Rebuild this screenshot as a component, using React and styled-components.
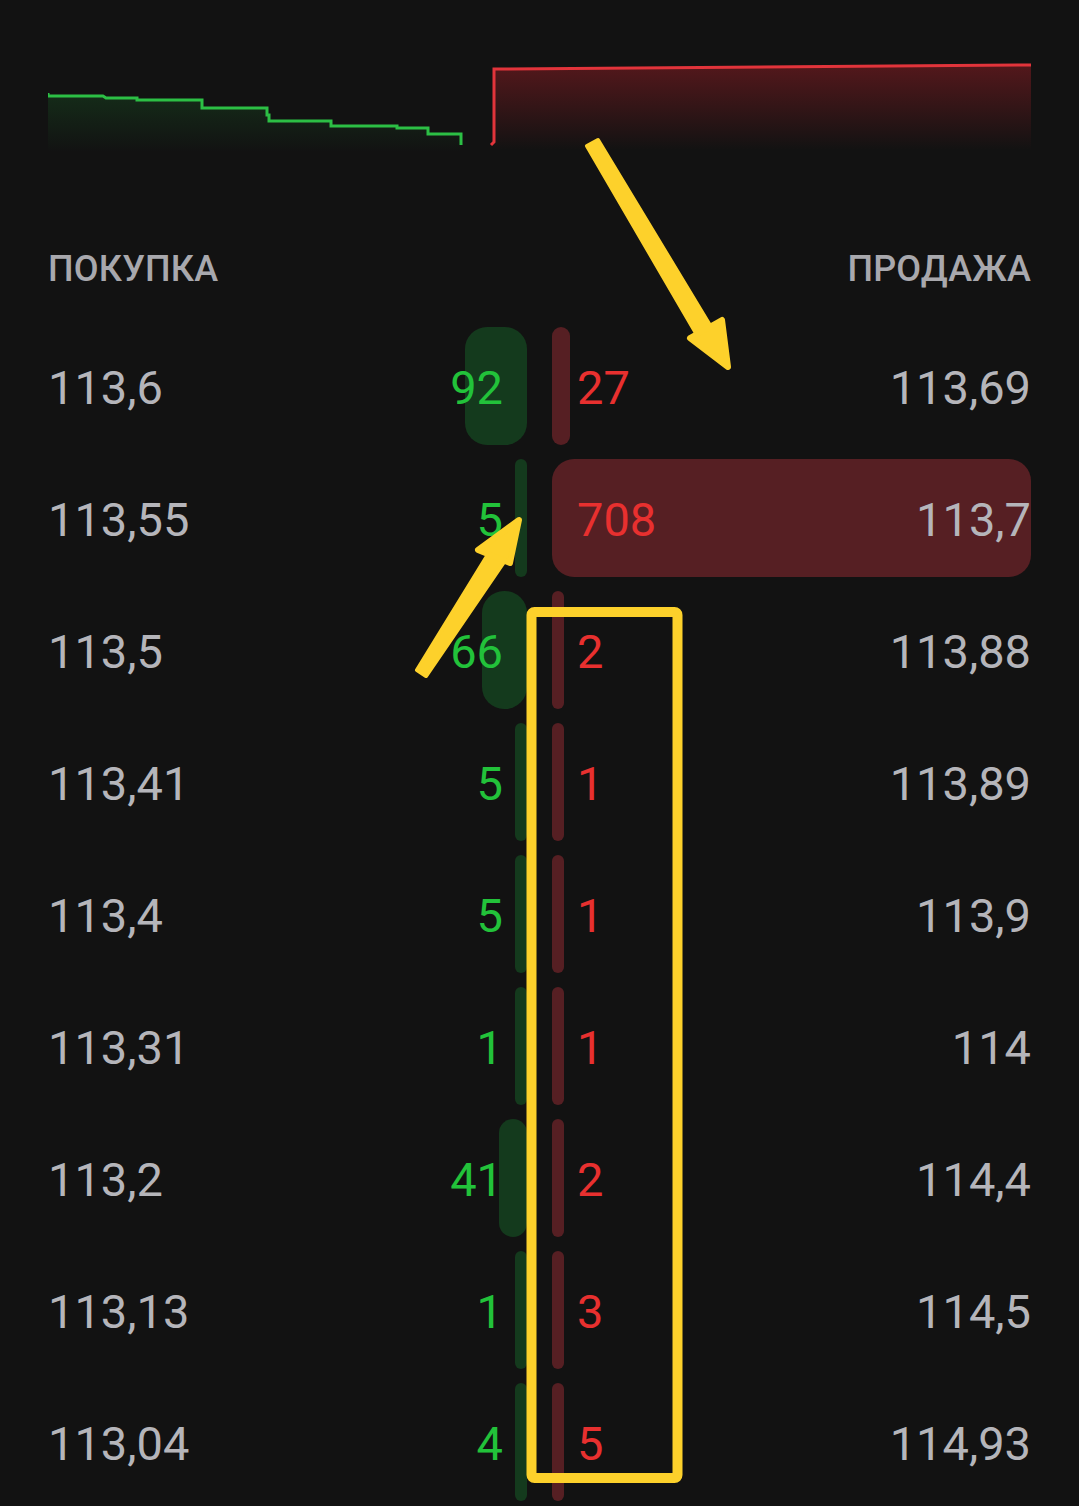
import React from "react";
import styled, { createGlobalStyle } from "styled-components";

const GlobalStyle = createGlobalStyle`
	html, body {
		margin: 0;
		padding: 0;
		background: #121212;
	}
	body {
		font-family: Roboto, "Noto Sans", "Liberation Sans", sans-serif;
	}
`;

const MAX_QTY = 708;
const SIDE_WIDTH = 479;

const bids = [
	{ price: "113,6", qty: 92 },
	{ price: "113,55", qty: 5 },
	{ price: "113,5", qty: 66 },
	{ price: "113,41", qty: 5 },
	{ price: "113,4", qty: 5 },
	{ price: "113,31", qty: 1 },
	{ price: "113,2", qty: 41 },
	{ price: "113,13", qty: 1 },
	{ price: "113,04", qty: 4 },
];

const asks = [
	{ price: "113,69", qty: 27 },
	{ price: "113,7", qty: 708 },
	{ price: "113,88", qty: 2 },
	{ price: "113,89", qty: 1 },
	{ price: "113,9", qty: 1 },
	{ price: "114", qty: 1 },
	{ price: "114,4", qty: 2 },
	{ price: "114,5", qty: 3 },
	{ price: "114,93", qty: 5 },
];

const barWidth = (qty) => Math.max(12, (qty / MAX_QTY) * SIDE_WIDTH);

const DepthChart = () => (
	<ChartBox>
		<svg width="983" height="100" viewBox="48 55 983 100">
			<defs>
				<linearGradient id="gFill" x1="0" y1="0" x2="0" y2="1">
					<stop offset="0" stopColor="#22b43c" stopOpacity="0.16" />
					<stop offset="1" stopColor="#22b43c" stopOpacity="0" />
				</linearGradient>
				<linearGradient id="rFill" x1="0" y1="0" x2="0" y2="1">
					<stop offset="0" stopColor="#c8222c" stopOpacity="0.36" />
					<stop offset="1" stopColor="#c8222c" stopOpacity="0" />
				</linearGradient>
			</defs>
			<path
				d="M48,93 V96 H103 L106,98 H137 V100 H202 V108 H267 V115 H269 V121 H331 V126 H397 V128 H428 V134 H461 V152 H48 Z"
				fill="url(#gFill)"
			/>
			<path
				d="M48,93 V96 H103 L106,98 H137 V100 H202 V108 H267 V115 H269 V121 H331 V126 H397 V128 H428 V134 H461 V145"
				fill="none"
				stroke="#2cbf45"
				strokeWidth="3"
			/>
			<path d="M494,150 V69 L1031,65 V150 Z" fill="url(#rFill)" />
			<path
				d="M491,145 L494,142 V69 L1031,65"
				fill="none"
				stroke="#e2343b"
				strokeWidth="3"
			/>
		</svg>
	</ChartBox>
);

const Annotations = () => (
	<Overlay width="1079" height="1506" viewBox="0 0 1079 1506">
		<g fill="#fdd12b" stroke="#fdd12b" strokeLinejoin="round" strokeLinecap="round">
			<polygon points="587,146 598,140 714,332 700,340" strokeWidth="4" />
			<polygon points="690,338 722,320 728,367" strokeWidth="6" />
			<polygon points="417,670 426,676 508,556 492,548" strokeWidth="4" />
			<polygon points="478,550 510,563 519,520" strokeWidth="6" />
		</g>
		<rect
			x="531.5"
			y="612"
			width="146"
			height="866"
			rx="3"
			fill="none"
			stroke="#fdd12b"
			strokeWidth="10"
		/>
	</Overlay>
);

const App = () => (
	<>
		<GlobalStyle />
		<Page>
			<DepthChart />
			<Header>
				<HeaderLabel>ПОКУПКА</HeaderLabel>
				<HeaderLabel>ПРОДАЖА</HeaderLabel>
			</Header>
			<Book>
				{bids.map((bid, i) => (
					<Row key={i}>
						<Side>
							<Bar $side="bid" style={{ width: barWidth(bid.qty) }} />
							<Price>{bid.price}</Price>
							<Qty $side="bid">{bid.qty}</Qty>
						</Side>
						<Side>
							<Bar $side="ask" style={{ width: barWidth(asks[i].qty) }} />
							<Qty $side="ask">{asks[i].qty}</Qty>
							<Price>{asks[i].price}</Price>
						</Side>
					</Row>
				))}
			</Book>
			<Annotations />
		</Page>
	</>
);

export default App;

const Page = styled.div`
	position: relative;
	width: 1079px;
	height: 1506px;
	overflow: hidden;
	box-sizing: border-box;
	padding: 55px 48px 0;
	background: #121212;
`;

const ChartBox = styled.div`
	height: 100px;
	svg {
		display: block;
	}
`;

const Header = styled.div`
	display: flex;
	justify-content: space-between;
	align-items: center;
	height: 60px;
	margin-top: 84px;
`;

const HeaderLabel = styled.span`
	font-size: 36px;
	font-weight: 500;
	color: #a8a8ad;
	letter-spacing: 0.2px;
`;

const Book = styled.div`
	display: grid;
	grid-auto-rows: 118px;
	row-gap: 14px;
	padding-top: 28px;
`;

const Row = styled.div`
	display: grid;
	grid-template-columns: 1fr 1fr;
	column-gap: 25px;
`;

const Side = styled.div`
	position: relative;
	display: flex;
	align-items: center;
	justify-content: space-between;
	padding-top: 3px;
	box-sizing: border-box;
	font-size: 47px;
	line-height: 1;
`;

const Bar = styled.div`
	position: absolute;
	top: 0;
	bottom: 0;
	${(p) => (p.$side === "bid" ? "right: 0;" : "left: 0;")}
	border-radius: 22px;
	background: ${(p) => (p.$side === "bid" ? "#143a1d" : "#561f23")};
`;

const Price = styled.span`
	position: relative;
	color: #b5b5ba;
`;

const Qty = styled.span`
	position: relative;
	color: ${(p) => (p.$side === "bid" ? "#22c23a" : "#e8302f")};
	${(p) => (p.$side === "bid" ? "padding-right: 24px;" : "padding-left: 25px; margin-right: auto;")}
`;

const Overlay = styled.svg`
	position: absolute;
	top: 0;
	left: 0;
	pointer-events: none;
`;
